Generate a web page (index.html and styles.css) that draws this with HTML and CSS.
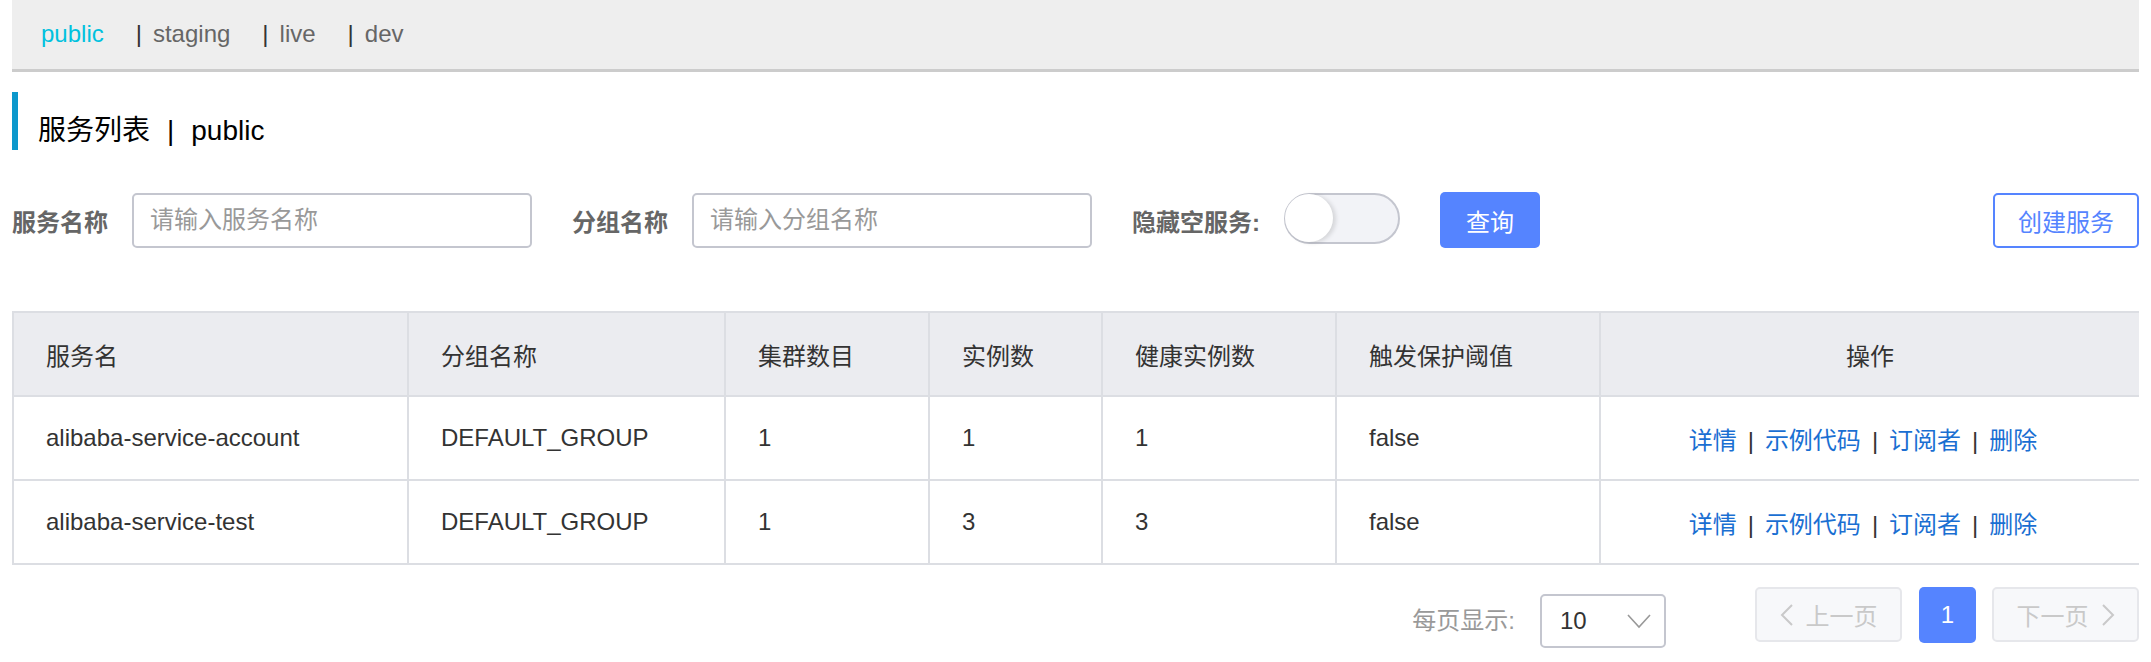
FILE: index.html
```html
<!DOCTYPE html>
<html lang="zh-CN">
  <head>
    <meta charset="UTF-8" />
    <title>服务列表</title>
    <link rel="stylesheet" href="styles.css">
  </head>
  <body>
    <nav class="ns-bar" aria-label="命名空间">
      <a class="ns-link active">public</a>
      <a class="ns-link"><span class="ns-sep">|</span>staging</a>
      <a class="ns-link"><span class="ns-sep">|</span>live</a>
      <a class="ns-link"><span class="ns-sep">|</span>dev</a>
    </nav>

    <main class="page">
      <h1 class="page-title">服务列表<span class="title-sep">|</span>public</h1>

      <!-- search form -->
      <form class="filter" onsubmit="return false">
        <div class="filter-item">
          <label class="filter-label">服务名称</label>
          <input class="filter-input" type="text" placeholder="请输入服务名称" />
        </div>
        <div class="filter-item">
          <label class="filter-label">分组名称</label>
          <input class="filter-input" type="text" placeholder="请输入分组名称" />
        </div>
        <div class="filter-item">
          <label class="filter-label">隐藏空服务:</label>
          <span class="switch" role="switch" aria-checked="false"><span class="switch-knob"></span></span>
        </div>
        <button class="btn btn-primary" type="button">查询</button>
        <button class="btn btn-outline btn-create" type="button">创建服务</button>
      </form>

      <table class="service-table">
        <colgroup>
          <col style="width: 395px" />
          <col style="width: 317px" />
          <col style="width: 204px" />
          <col style="width: 173px" />
          <col style="width: 234px" />
          <col style="width: 264px" />
          <col style="width: 540px" />
        </colgroup>
        <thead>
          <tr>
            <th>服务名</th>
            <th>分组名称</th>
            <th>集群数目</th>
            <th>实例数</th>
            <th>健康实例数</th>
            <th>触发保护阈值</th>
            <th class="center">操作</th>
          </tr>
        </thead>
        <tbody>
          <tr>
            <td>alibaba-service-account</td>
            <td>DEFAULT_GROUP</td>
            <td>1</td>
            <td>1</td>
            <td>1</td>
            <td>false</td>
            <td class="center ops">
              <a class="op-link">详情</a><span class="op-sep">|</span><a class="op-link">示例代码</a><span class="op-sep">|</span><a class="op-link">订阅者</a><span class="op-sep">|</span><a class="op-link">删除</a>
            </td>
          </tr>
          <tr>
            <td>alibaba-service-test</td>
            <td>DEFAULT_GROUP</td>
            <td>1</td>
            <td>3</td>
            <td>3</td>
            <td>false</td>
            <td class="center ops">
              <a class="op-link">详情</a><span class="op-sep">|</span><a class="op-link">示例代码</a><span class="op-sep">|</span><a class="op-link">订阅者</a><span class="op-sep">|</span><a class="op-link">删除</a>
            </td>
          </tr>
        </tbody>
      </table>

      <div class="pager">
        <span class="page-size-label">每页显示:</span>
        <div class="page-size">
          <span>10</span>
          <svg class="arrow-down" width="26" height="16" viewBox="0 0 26 16" aria-hidden="true">
            <polyline points="2,2 13,14 24,2" fill="none" stroke="#999" stroke-width="1.6" />
          </svg>
        </div>
        <button class="pg-btn pg-prev" type="button" disabled>
          <svg width="14" height="24" viewBox="0 0 14 24" aria-hidden="true">
            <polyline points="12,2 2,12 12,22" fill="none" stroke="#c9c9c9" stroke-width="2" />
          </svg>
          上一页
        </button>
        <button class="pg-num current" type="button">1</button>
        <button class="pg-btn pg-next" type="button" disabled>
          下一页
          <svg width="14" height="24" viewBox="0 0 14 24" aria-hidden="true">
            <polyline points="2,2 12,12 2,22" fill="none" stroke="#c9c9c9" stroke-width="2" />
          </svg>
        </button>
      </div>
    </main>
  </body>
</html>
```

FILE: styles.css
```css
/* base */
* {
  box-sizing: border-box;
}
body {
  margin: 0 12px;
  font-family: "Liberation Sans", "Noto Sans CJK SC", sans-serif;
  font-size: 24px;
  color: #333;
  background: #fff;
}
a {
  cursor: pointer;
}

/* namespace bar */
.ns-bar {
  display: flex;
  height: 72px;
  padding-left: 29px;
  background: #eee;
  border-bottom: 3px solid #ccc;
  line-height: 68px;
  font-size: 24px;
}
.ns-link {
  color: #666;
}
.ns-link + .ns-link {
  margin-left: 32px;
}
.ns-link.active {
  color: #00c1de;
}
.ns-sep {
  color: #333;
  margin-right: 11px;
}

/* title */
.page-title {
  margin: 20px 0 0;
  height: 58px;
  padding: 20px 0 0 20px;
  border-left: 6px solid #0c98cc;
  font-size: 28px;
  font-weight: normal;
  line-height: 38px;
  color: #000;
}
.title-sep {
  margin: 0 17px;
}

/* filter form */
.filter {
  display: flex;
  align-items: center;
  margin-top: 42px;
  height: 56px;
}
.filter-item {
  display: flex;
  align-items: center;
  margin-right: 40px;
}
.filter-label {
  margin-right: 24px;
  font-weight: bold;
  color: #666;
}
.filter-input {
  width: 400px;
  height: 55px;
  padding: 0 16px;
  border: 2px solid #c4c6cf;
  border-radius: 5px;
  font: inherit;
  color: #333;
  outline: none;
}
.filter-input::placeholder {
  color: #999;
}
.switch {
  display: flex;
  align-items: center;
  width: 116px;
  height: 51px;
  margin-top: -4px;
  border: 2px solid #c4c6cf;
  border-radius: 26px;
  background: #f2f3f7;
}
.switch-knob {
  width: 48px;
  height: 48px;
  margin-left: -1px;
  border-radius: 50%;
  background: #fff;
  box-shadow: 3px 1px 4px rgb(0 0 0 / 0.12);
}

.btn {
  height: 56px;
  padding: 0 24px;
  border-radius: 5px;
  font: inherit;
  white-space: nowrap;
  cursor: pointer;
}
.btn-primary {
  width: 100px;
  background: #5584ff;
  border: none;
  color: #fff;
}
.btn-outline {
  height: 55px;
  background: #fff;
  border: 2px solid #5584ff;
  color: #5584ff;
}
.btn-create {
  margin-left: auto;
  padding: 0 23px;
}

/* table */
.service-table {
  width: 100%;
  margin-top: 63px;
  table-layout: fixed;
  border-collapse: collapse;
  border: 2px solid #dcdee3;
}
.service-table th,
.service-table td {
  height: 84px;
  padding: 0 32px;
  border: 2px solid #dcdee3;
  text-align: left;
  font-weight: normal;
  color: #333;
  white-space: nowrap;
}
.service-table th {
  background: #ebecf0;
}
.service-table .center {
  text-align: center;
}
.service-table td.ops {
  padding: 0 46px 0 32px;
}
.op-link {
  color: #1a6fd2;
}
.op-sep {
  margin: 0 11px;
  color: #333;
}

/* pagination */
.pager {
  display: flex;
  justify-content: flex-end;
  align-items: flex-start;
  margin-top: 22px;
}
.page-size-label {
  margin-top: 7px;
  line-height: 54px;
  color: #999;
}
.page-size {
  display: flex;
  align-items: center;
  justify-content: space-between;
  width: 126px;
  height: 54px;
  margin: 7px 0 0 25px;
  padding: 0 12px 0 18px;
  border: 2px solid #c4c6cf;
  border-radius: 5px;
  color: #333;
}
.pg-btn {
  display: flex;
  align-items: center;
  justify-content: center;
  gap: 12px;
  width: 147px;
  height: 55px;
  background: #f7f8fa;
  border: 2px solid #e6e7eb;
  border-radius: 5px;
  font: inherit;
  color: #c9c9c9;
}
.pg-prev {
  margin-left: 89px;
}
.pg-num {
  width: 57px;
  height: 56px;
  margin: 0 16px 0 17px;
  border: none;
  border-radius: 5px;
  font: inherit;
}
.pg-num.current {
  background: #5584ff;
  color: #fff;
}
```
